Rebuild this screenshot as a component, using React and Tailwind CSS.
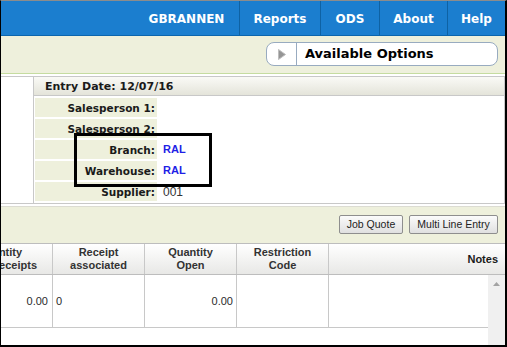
import React from 'react';

const navItems = [
  { label: 'GBRANNEN', w: 'w-[105px]' },
  { label: 'Reports', w: 'w-[81px] border-l' },
  { label: 'ODS', w: 'w-[59px] border-l' },
  { label: 'About', w: 'w-[68px] border-l' },
  { label: 'Help', w: 'w-[58px] border-l' },
];

const fields = [
  { label: 'Salesperson 1:', value: '' },
  { label: 'Salesperson 2:', value: '' },
  { label: 'Branch:', value: 'RAL', link: true },
  { label: 'Warehouse:', value: 'RAL', link: true },
  { label: 'Supplier:', value: '001' },
];

function ToolButton({ children, w }) {
  return (
    <button
      className={`${w} h-[19px] rounded-[2px] border border-[#8e8e8e] bg-gradient-to-b from-[#fbfbfb] to-[#e0e0e0] text-[10.5px] text-[#222] font-['Liberation_Sans',Arial,sans-serif] leading-none`}
    >
      {children}
    </button>
  );
}

export default function App() {
  return (
    <div className="relative w-[507px] h-[347px] overflow-hidden bg-white flex flex-col border-t border-t-[#8c8c8c] border-l border-l-black border-r-2 border-r-black border-b-2 border-b-black font-['DejaVu_Sans',Verdana,sans-serif] text-[#1e1e1e]">
      {/* Top navigation */}
      <nav className="h-[35px] shrink-0 flex justify-end bg-[#1b7ecf] border-b border-[#0b65ad] text-white font-bold text-[12px]">
        {navItems.map((item) => (
          <div key={item.label} className={`${item.w} border-[#0e62a4] flex items-center justify-center pt-[2px]`}>
            {item.label}
          </div>
        ))}
      </nav>

      {/* Options bar */}
      <div className="h-[38px] shrink-0 flex justify-end items-start pt-[6px] pr-[7px] bg-[#eef0dc] border-b border-[#c5dca0]">
        <div className="w-[232px] h-[24px] flex rounded-[8px] border border-[#98abc0] bg-white">
          <div className="w-[30px] border-r border-[#98abc0] flex items-center justify-center">
            <svg width="8" height="11" viewBox="0 0 8 11">
              <polygon points="0.5,0.5 7.5,5.5 0.5,10.5" fill="#959595" stroke="#bdbdbd" strokeWidth="1" />
            </svg>
          </div>
          <div className="pl-[8px] flex items-center font-bold text-[13px] text-black">Available Options</div>
        </div>
      </div>

      {/* Header panel */}
      <div className="mt-[2px] h-[128px] shrink-0 flex border-y border-[#c8c8c8]">
        <div className="w-[33px] border-r border-[#c8c8c8]" />
        <div className="flex-1 flex flex-col border-r border-[#c8c8c8]">
          <div className="h-[19px] shrink-0 flex items-center pl-[11px] pt-[2px] border-b border-[#c8c8c8] bg-gradient-to-b from-[#fafaf6] to-[#e4e4da] font-bold text-[11px] text-[#1a1a1a]">
            Entry Date: 12/07/16
          </div>
          <div className="pt-[2px]">
            {fields.map((f) => (
              <div key={f.label} className="h-[19px] mb-[2px] flex">
                <div className="w-[122px] ml-[1px] pr-[2px] pt-[2px] bg-[#eef0dc] flex items-center justify-end font-bold text-[10.5px] text-[#1a1a1a]">
                  {f.label}
                </div>
                <div
                  className={`pl-[6px] flex items-center font-['Liberation_Sans',Arial,sans-serif] ${
                    f.link ? 'font-bold text-[11px] text-[#1f1fe6]' : 'text-[12px] text-[#333]'
                  }`}
                >
                  {f.value}
                </div>
              </div>
            ))}
          </div>
        </div>
      </div>

      {/* Toolbar */}
      <div className="mt-[2px] h-[38px] shrink-0 flex justify-end items-start gap-[6px] pt-[8px] pr-[7px] bg-[#eef0dc] border-t border-t-[#dcdcd2] border-b border-b-[#bdbdbd]">
        <ToolButton w="w-[64px]">Job Quote</ToolButton>
        <ToolButton w="w-[89px]">Multi Line Entry</ToolButton>
      </div>

      {/* Grid */}
      <div className="flex-1 flex flex-col font-['Liberation_Sans',Arial,sans-serif]">
        <div className="h-[31px] shrink-0 flex border-b border-[#bdbdbd] bg-gradient-to-b from-white to-[#e8e8e6] font-bold text-[11px] leading-[13px] text-[#333]">
          <div className="w-[52px] shrink-0 overflow-hidden flex justify-end items-center border-r border-[#c8c8c8]">
            <div className="shrink-0 whitespace-nowrap text-center mr-[15px]">
              Quantity
              <br />
              Total Receipts
            </div>
          </div>
          <div className="w-[92px] shrink-0 flex items-center justify-center text-center border-r border-[#c8c8c8]">
            Receipt
            <br />
            associated
          </div>
          <div className="w-[92px] shrink-0 flex items-center justify-center text-center border-r border-[#c8c8c8]">
            Quantity
            <br />
            Open
          </div>
          <div className="w-[92px] shrink-0 flex items-center justify-center text-center border-r border-[#c8c8c8]">
            Restriction
            <br />
            Code
          </div>
          <div className="flex-1 flex items-center justify-end pr-[7px] text-[#1a1a1a]">Notes</div>
        </div>

        <div className="flex-1 flex">
          <div className="flex-1 flex flex-col">
            <div className="h-[53px] flex border-b border-[#c8c8c8] text-[11px] text-[#2a2a2a]">
              <div className="w-[52px] shrink-0 flex items-center justify-end pr-[4px] border-r border-[#c8c8c8]">0.00</div>
              <div className="w-[92px] shrink-0 flex items-center pl-[3px] border-r border-[#c8c8c8]">0</div>
              <div className="w-[92px] shrink-0 flex items-center justify-end pr-[3px] border-r border-[#c8c8c8]">0.00</div>
              <div className="w-[92px] shrink-0 border-r border-[#c8c8c8]" />
              <div className="flex-1" />
            </div>
          </div>
          <div className="w-[17px] shrink-0 bg-[#f0f0f0] flex justify-center pt-[7px]">
            <svg width="7" height="4" viewBox="0 0 7 4">
              <polygon points="0,4 3.5,0 7,4" fill="#a3a3a3" />
            </svg>
          </div>
        </div>
      </div>

      {/* Annotation box */}
      <div className="absolute left-[73px] top-[132px] w-[138px] h-[54px] border-[3px] border-black" />
    </div>
  );
}
